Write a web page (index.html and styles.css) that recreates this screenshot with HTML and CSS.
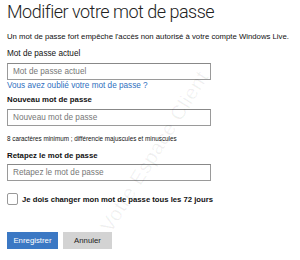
FILE: index.html
```html
<!DOCTYPE html>
<html lang="fr">
<head>
<meta charset="utf-8">
<title>Modifier votre mot de passe</title>
<link rel="stylesheet" href="styles.css">
</head>
<body>
<div class="page">
  <h1 class="title">Modifier votre mot de passe</h1>
  <p class="intro">Un mot de passe fort empêche l'accès non autorisé à votre compte Windows Live.</p>

  <div class="field first">
    <label class="label">Mot de passe actuel</label>
    <input class="input" type="password" placeholder="Mot de passe actuel">
    <a class="link" href="#">Vous avez oublié votre mot de passe ?</a>
  </div>

  <div class="field second">
    <label class="label bold">Nouveau mot de passe</label>
    <input class="input" type="password" placeholder="Nouveau mot de passe">
    <div class="hint">8 caractères minimum ; différencie majuscules et minuscules</div>
  </div>

  <div class="field third">
    <label class="label bold">Retapez le mot de passe</label>
    <input class="input" type="password" placeholder="Retapez le mot de passe">
  </div>

  <label class="check">
    <span class="box"></span>
    <span class="check-text">Je dois changer mon mot de passe tous les 72 jours</span>
  </label>

  <div class="actions">
    <button class="btn primary">Enregistrer</button>
    <button class="btn secondary">Annuler</button>
  </div>

  <div class="watermark">Votre Espace Client</div>
</div>
</body>
</html>
```
FILE: styles.css
```css
* { box-sizing: border-box; }
html, body { margin: 0; padding: 0; background: #fff; }
body {
  font-family: "Liberation Sans", Arial, sans-serif;
  color: #111;
  width: 300px;
  height: 260px;
  overflow: hidden;
}
.page {
  position: relative;
  padding: 0 7px;
  display: flex;
  flex-direction: column;
}
.title {
  margin: 0;
  font-family: Roboto, "Liberation Sans", sans-serif;
  font-weight: 300;
  font-size: 18px;
  line-height: 24px;
  letter-spacing: -0.5px;
  color: #222;
}
.intro {
  margin: 7px 0 0;
  font-size: 7.75px;
  line-height: 12px;
  white-space: nowrap;
}
.field {
  display: flex;
  flex-direction: column;
}
.field.first { margin-top: 5px; }
.field.second { margin-top: 2px; }
.field.third { margin-top: 6px; }
.label {
  font-size: 8.2px;
  line-height: 12px;
}
.label.bold { font-weight: bold; font-size: 7.8px; }
.input {
  margin-top: 3px;
  width: 204px;
  height: 17px;
  border: 1px solid #9a9a9a;
  border-top-color: #888;
  padding: 0 5px;
  font-family: "Liberation Sans", Arial, sans-serif;
  font-size: 8.2px;
  color: #333;
  outline: none;
  background: #fff;
}
.third .input { margin-top: 2px; }
.input::placeholder { color: #777; }
.link {
  font-size: 8.2px;
  line-height: 12px;
  color: #2f6fc0;
  text-decoration: none;
}
.hint {
  margin-top: 8px;
  font-size: 6.3px;
  line-height: 10px;
}
.check {
  margin-top: 12px;
  display: flex;
  align-items: center;
  gap: 4px;
}
.box {
  width: 11px;
  height: 12px;
  border: 1px solid #999;
  border-radius: 2px;
  background: #fff;
}
.check-text {
  font-size: 7.7px;
  font-weight: bold;
}
.actions {
  margin-top: 27px;
  display: flex;
  gap: 5px;
}
.btn {
  height: 17px;
  padding: 0;
  border: none;
  font-family: "Liberation Sans", Arial, sans-serif;
  font-size: 7.8px;
}
.btn.primary {
  width: 51px;
  background: #3b78c4;
  color: #fff;
}
.btn.secondary {
  width: 49px;
  background: #d3d3d3;
  color: #222;
}
.watermark {
  position: absolute;
  left: 62px;
  top: 140px;
  transform: rotate(-58deg);
  font-size: 20px;
  color: rgba(0, 0, 0, 0.06);
  white-space: nowrap;
  pointer-events: none;
  letter-spacing: 0.5px;
}
```
